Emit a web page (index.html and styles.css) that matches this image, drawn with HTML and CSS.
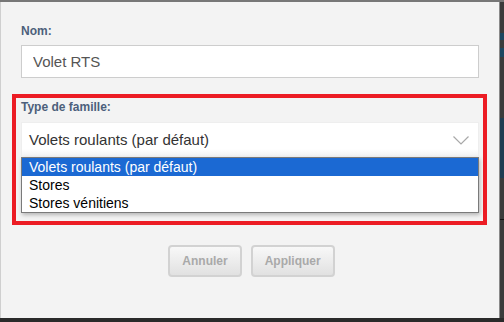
FILE: index.html
```html
<!DOCTYPE html>
<html lang="fr">
<head>
    <meta charset="UTF-8">
    <meta name="viewport" content="width=device-width, initial-scale=1.0">
    <title>Famille de volet</title>
    <link rel="stylesheet" href="styles.css">
</head>
<body>

    <div class="modal">

        <!-- Name field -->
        <label class="field-label" for="nom">Nom:</label>
        <input class="text-input" id="nom" type="text" value="Volet RTS">

        <!-- Family type, highlighted with a red frame -->
        <div class="family-box">
            <div class="field-label">Type de famille:</div>
            <div class="select-box">
                <span>Volets roulants (par défaut)</span>
                <svg class="chevron" width="16" height="9" viewBox="0 0 16 9">
                    <polyline points="0.5,0.5 8,8 15.5,0.5" fill="none" stroke="#a8a8a8" stroke-width="1.2"/>
                </svg>
            </div>
            <ul class="option-list">
                <li class="selected">Volets roulants (par défaut)</li>
                <li>Stores</li>
                <li>Stores vénitiens</li>
            </ul>
        </div>

        <!-- Buttons -->
        <div class="actions">
            <button class="btn" disabled>Annuler</button>
            <button class="btn" disabled>Appliquer</button>
        </div>

    </div>

</body>
</html>
```

FILE: styles.css
```css
/* Page behind the dialog */
body {
    margin: 0;
    height: 322px;
    overflow: hidden;
    font-family: "Liberation Sans", Arial, sans-serif;
    background: linear-gradient(to bottom,
        #777 0, #777 2px,
        #3b3b3b 2px, #3b3b3b 33px,
        #1d4660 33px, #1d4660 40px,
        #3b3b3b 40px, #3b3b3b 48px,
        #1d4660 48px, #1d4660 57px,
        #3b3b3b 57px, #3b3b3b 118px,
        #203d52 118px, #203d52 178px,
        #3b3b3b 178px, #3b3b3b 219px,
        #111 219px, #111 220px,
        #3b3b3b 220px, #3b3b3b 318px,
        #2a2a2a 318px);
}

/* Dialog panel */
.modal {
    box-sizing: border-box;
    width: 500px;
    height: 316px;
    margin-top: 2px;
    padding: 22px 20px 0 20px;
    background: #f3f3f3;
    border-left: 1px solid #cfcfcf;
    border-right: 1px solid #8a8a8a;
    display: flex;
    flex-direction: column;
}

.field-label {
    display: block;
    font-size: 12px;
    line-height: 15px;
    font-weight: bold;
    color: #4c5f7b;
}

.text-input {
    box-sizing: border-box;
    width: 100%;
    height: 33px;
    margin-top: 6px;
    padding: 0 11px;
    border: 1px solid #cdcdcd;
    background: #fff;
    font-family: inherit;
    font-size: 15px;
    color: #555;
    outline: none;
}

/* Red annotation frame */
.family-box {
    margin: 16px -8px 0 -9px;
    padding: 2px 4px 8px 5px;
    border: 4px solid #ec1c24;
}

.select-box {
    box-sizing: border-box;
    height: 34px;
    margin-top: 7px;
    padding: 0 9px 0 7px;
    display: flex;
    align-items: center;
    justify-content: space-between;
    border: 1px solid #eee;
    border-bottom: none;
    background: linear-gradient(to bottom, #fff 0, #fff 26px, #f1f1f1 34px);
    font-size: 15px;
    color: #333;
}

.chevron {
    margin-top: 2px;
}

/* Open dropdown */
.option-list {
    list-style: none;
    margin: 1px 0 0 0;
    padding: 0;
    border: 1px solid #7a7a7a;
    background: #fff;
    box-shadow: 1px 2px 4px rgba(0, 0, 0, 0.25);
}

.option-list li {
    height: 18px;
    line-height: 18px;
    padding-left: 7px;
    font-size: 14px;
    color: #000;
}

.option-list li.selected {
    background: #1b69d3;
    color: #fff;
}

/* Dialog buttons */
.actions {
    margin-top: 20px;
    padding-left: 3px;
    display: flex;
    justify-content: center;
    gap: 9px;
}

.btn {
    height: 32px;
    padding: 0 12px;
    border: 2px solid #d2d2d2;
    border-radius: 4px;
    background: linear-gradient(to bottom, #f8f8f8, #e1e1e1);
    font-family: inherit;
    font-size: 12px;
    font-weight: bold;
    color: #a9a9a9;
}
```
